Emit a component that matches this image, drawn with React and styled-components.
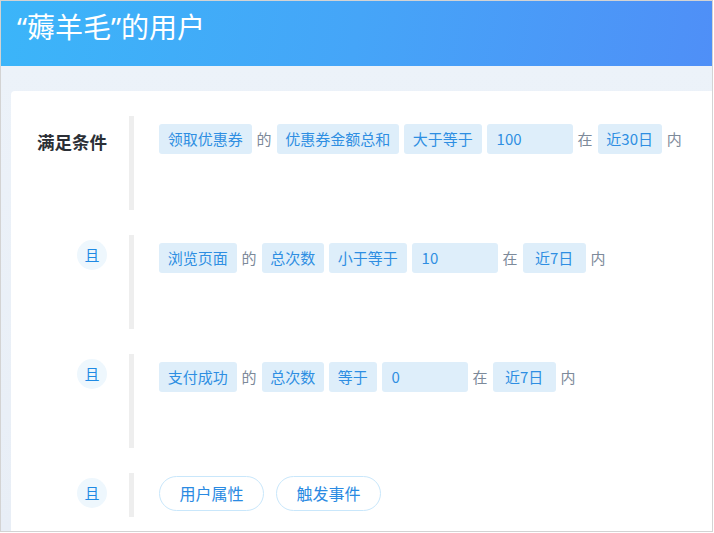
import React from "react";
import styled, { createGlobalStyle } from "styled-components";

const GlobalStyle = createGlobalStyle`
    html, body {
        margin: 0;
        padding: 0;
        background: #ffffff;
    }
    body {
        font-family: "Noto Sans CJK SC", "Noto Sans", sans-serif;
    }
`;

const rules = [
    {
        label: "满足条件",
        main: true,
        parts: [
            { type: "chip", text: "领取优惠券" },
            { type: "word", text: "的" },
            { type: "chip", text: "优惠券金额总和" },
            { type: "chip", text: "大于等于" },
            { type: "input", text: "100" },
            { type: "word", text: "在" },
            { type: "range", text: "近30日" },
            { type: "word", text: "内" },
        ],
    },
    {
        label: "且",
        parts: [
            { type: "chip", text: "浏览页面" },
            { type: "word", text: "的" },
            { type: "chip", text: "总次数" },
            { type: "chip", text: "小于等于" },
            { type: "input", text: "10" },
            { type: "word", text: "在" },
            { type: "range", text: "近7日" },
            { type: "word", text: "内" },
        ],
    },
    {
        label: "且",
        parts: [
            { type: "chip", text: "支付成功" },
            { type: "word", text: "的" },
            { type: "chip", text: "总次数" },
            { type: "chip", text: "等于" },
            { type: "input", text: "0" },
            { type: "word", text: "在" },
            { type: "range", text: "近7日" },
            { type: "word", text: "内" },
        ],
    },
];

const App = () => {
    return (
        <>
            <GlobalStyle />
            <Frame>
                <Header>
                    <Title>“薅羊毛”的用户</Title>
                </Header>
                <Body>
                    <Card>
                        {rules.map((rule, i) => (
                            <Row key={i}>
                                <LabelCell>
                                    {rule.main ? (
                                        <MainLabel>{rule.label}</MainLabel>
                                    ) : (
                                        <AndBadge>{rule.label}</AndBadge>
                                    )}
                                </LabelCell>
                                <Bar />
                                <Content>
                                    {rule.parts.map((p, j) => {
                                        if (p.type === "word") return <Word key={j}>{p.text}</Word>;
                                        if (p.type === "input") return <ValueBox key={j}>{p.text}</ValueBox>;
                                        return (
                                            <Chip key={j} $range={p.type === "range"}>
                                                {p.text}
                                            </Chip>
                                        );
                                    })}
                                </Content>
                            </Row>
                        ))}
                        <Row $short>
                            <LabelCell>
                                <AndBadge>且</AndBadge>
                            </LabelCell>
                            <Bar />
                            <Content $buttons>
                                <PillButton>用户属性</PillButton>
                                <PillButton>触发事件</PillButton>
                            </Content>
                        </Row>
                    </Card>
                </Body>
            </Frame>
        </>
    );
};

const Frame = styled.div`
    box-sizing: border-box;
    width: 713px;
    height: 532px;
    border: 1px solid #d3d3d3;
    overflow: hidden;
    display: flex;
    flex-direction: column;
`;

const Header = styled.div`
    flex: 0 0 65px;
    box-sizing: border-box;
    padding: 8px 16px 0;
    background: linear-gradient(100deg, #3bb5f9 0%, #45a5f8 50%, #4f8ff7 100%);
`;

const Title = styled.h1`
    margin: 0;
    font-family: "Noto Sans", "Noto Sans CJK SC", sans-serif;
    font-size: 28px;
    line-height: 36px;
    font-weight: 400;
    color: #ffffff;
    white-space: nowrap;
`;

const Body = styled.div`
    flex: 1;
    display: flex;
    padding: 25px 0 0 10px;
    background: linear-gradient(180deg, #ecf2f9 0%, #e8eef6 100%);
`;

const Card = styled.div`
    flex: 1;
    display: flex;
    flex-direction: column;
    gap: 25px;
    padding: 25px 0 0;
    background: #ffffff;
    border-radius: 4px 0 0 0;
`;

const Row = styled.div`
    display: flex;
    min-height: ${(p) => (p.$short ? "44px" : "94px")};
`;

const LabelCell = styled.div`
    width: 96px;
    margin-right: 22px;
    display: flex;
    justify-content: flex-end;
    align-items: flex-start;
    padding-top: 5px;
`;

const MainLabel = styled.div`
    margin-top: 9px;
    font-size: 17.5px;
    line-height: 24px;
    font-weight: 700;
    color: #2b2f36;
    white-space: nowrap;
`;

const AndBadge = styled.div`
    width: 30px;
    height: 30px;
    border-radius: 50%;
    background: #eef7fd;
    color: #1f8ae4;
    font-size: 15px;
    line-height: 30px;
    text-align: center;
`;

const Bar = styled.div`
    width: 5px;
    align-self: stretch;
    background: #eeeeee;
`;

const Content = styled.div`
    display: flex;
    align-items: center;
    align-self: flex-start;
    gap: ${(p) => (p.$buttons ? "12px" : "5px")};
    padding: ${(p) => (p.$buttons ? "3px 0 0 25px" : "8px 0 0 25px")};
    white-space: nowrap;
`;

const Chip = styled.span`
    box-sizing: border-box;
    height: 30px;
    padding: 0 8.75px;
    min-width: ${(p) => (p.$range ? "63px" : "0")};
    text-align: center;
    font-size: 15px;
    line-height: 30px;
    color: #2e8ee2;
    background: #deeefa;
    border-radius: 3px;
`;

const ValueBox = styled.span`
    box-sizing: border-box;
    width: 86px;
    height: 30px;
    padding: 0 10px;
    font-size: 15px;
    line-height: 30px;
    color: #2e8ee2;
    background: #deeefa;
    border-radius: 3px;
`;

const Word = styled.span`
    font-size: 15px;
    line-height: 30px;
    color: #7d8a9a;
`;

const PillButton = styled.button`
    box-sizing: border-box;
    height: 35px;
    padding: 0 19.5px;
    font-family: inherit;
    font-size: 16px;
    line-height: 33px;
    color: #2a8ae2;
    background: #ffffff;
    border: 1px solid #c9e7fb;
    border-radius: 18px;
    cursor: pointer;
`;

export default App;
